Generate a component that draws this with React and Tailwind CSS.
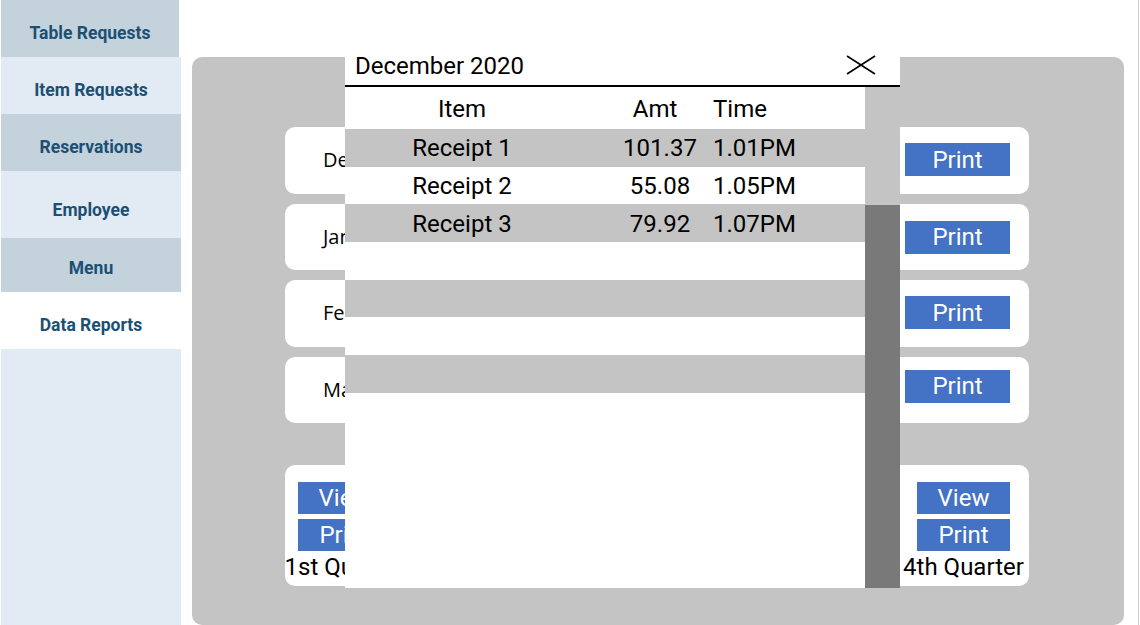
import React from 'react';

const navItems = [
  { label: 'Table Requests', h: 'h-[57px]', pt: 'pt-[10px]', bg: 'bg-[#c4d2dc]', w: 'w-[178px]' },
  { label: 'Item Requests', h: 'h-[57px]', pt: 'pt-[10px]', bg: 'bg-[#e2eaf4]', w: 'w-[180px]' },
  { label: 'Reservations', h: 'h-[57px]', pt: 'pt-[10px]', bg: 'bg-[#c4d2dc]', w: 'w-[180px]' },
  { label: 'Employee', h: 'h-[67px]', pt: 'pt-[12px]', bg: 'bg-[#e2eaf4]', w: 'w-[180px]' },
  { label: 'Menu', h: 'h-[54px]', pt: 'pt-[6px]', bg: 'bg-[#c4d2dc]', w: 'w-[180px]' },
  { label: 'Data Reports', h: 'h-[57px]', pt: 'pt-[10px]', bg: 'bg-white', w: 'w-[180px]' },
];

const months = [
  { name: 'December 2020', btn: 'mt-[16px]' },
  { name: 'January 2021', btn: 'mt-[17px]' },
  { name: 'February 2021', btn: 'mt-[16px]' },
  { name: 'March 2021', btn: 'mt-[13px]' },
];
const quarters = ['1st Quarter', '2nd Quarter', '3rd Quarter', '4th Quarter'];

const receipts = [
  { item: 'Receipt 1', amt: '101.37', time: '1.01PM' },
  { item: 'Receipt 2', amt: '55.08', time: '1.05PM' },
  { item: 'Receipt 3', amt: '79.92', time: '1.07PM' },
  { item: '', amt: '', time: '' },
  { item: '', amt: '', time: '' },
  { item: '', amt: '', time: '' },
  { item: '', amt: '', time: '' },
];

const Sidebar = () => (
  <div className="w-[182px] flex flex-col pl-px shrink-0">
    {navItems.map((n) => (
      <div
        key={n.label}
        className={`${n.h} ${n.pt} ${n.bg} ${n.w} flex items-center justify-center text-[17.5px] font-bold text-[#1b4f74]`}
      >
        {n.label}
      </div>
    ))}
    <div className="flex-1 w-[180px] bg-[#e2eaf4]" />
  </div>
);

const BlueButton = ({ children, className = '' }) => (
  <div className={`bg-[#4472c4] text-white text-[24px] leading-none flex items-center justify-center ${className}`}>
    {children}
  </div>
);

const ReceiptModal = () => (
  <div className="absolute left-[345px] top-[51px] w-[555px] h-[537px] flex flex-col">
    <div className="h-[36px] bg-white border-b-2 border-black flex items-start justify-between pl-[10px] pr-[24px] shrink-0">
      <span className="text-[24px] leading-7 pt-px text-black">December 2020</span>
      <svg width="30" height="20" viewBox="0 0 30 20" className="mt-[4px]">
        <line x1="1" y1="1" x2="29" y2="19" stroke="black" strokeWidth="1.6" />
        <line x1="29" y1="1" x2="1" y2="19" stroke="black" strokeWidth="1.6" />
      </svg>
    </div>
    <div className="flex flex-1">
      <div className="w-[520px] bg-white text-[24px] text-black">
        <div className="h-[42px] flex items-center pt-[2px]">
          <span className="w-[234px] text-center">Item</span>
          <span className="ml-[26px] w-[100px] text-center">Amt</span>
          <span className="ml-[8px]">Time</span>
        </div>
        {receipts.map((r, i) => (
          <div
            key={i}
            className={`h-[37.7px] flex items-center pt-px ${i % 2 === 0 ? 'bg-[#c4c4c4]' : 'bg-white'}`}
          >
            <span className="w-[234px] text-center">{r.item}</span>
            <span className="ml-[31px] w-[100px] text-center">{r.amt}</span>
            <span className="ml-[3px]">{r.time}</span>
          </div>
        ))}
      </div>
      <div className="w-[35px] bg-[#c4c4c4] flex flex-col">
        <div className="h-[118px]" />
        <div className="flex-1 bg-[#797979]" />
      </div>
    </div>
  </div>
);

export default function App() {
  return (
    <div className="relative w-[1140px] h-[625px] flex bg-white overflow-hidden font-['Roboto',sans-serif]">
      <Sidebar />
      <div className="w-[957px] border-r border-[#cfcfcf] pl-[10px] pr-[14px] pt-[57px]">
        <div className="h-[568px] bg-[#c4c4c4] rounded-[10px] pt-[70px] pl-[93px]">
          <div className="w-[744px] flex flex-col gap-[10px]">
            {months.map((m) => (
              <div key={m.name} className="h-[66.5px] bg-white rounded-[10px] flex items-start justify-between pl-[38px] pr-[19px]">
                <span className="font-['Open_Sans',sans-serif] text-[20px] leading-[66px] text-black">{m.name}</span>
                <BlueButton className={`w-[105px] h-[33px] ${m.btn}`}>Print</BlueButton>
              </div>
            ))}
            <div className="mt-[32px] h-[121px] bg-white rounded-[10px] flex justify-between pl-[13px] pr-[19px] pt-[17px]">
              {quarters.map((q) => (
                <div key={q} className="w-[93px] flex flex-col items-center gap-[5px]">
                  <BlueButton className="w-[93px] h-[32px] shrink-0">View</BlueButton>
                  <BlueButton className="w-[93px] h-[32px] shrink-0">Print</BlueButton>
                  <span className="text-[24px] leading-7 -mt-[3px] whitespace-nowrap text-black">{q}</span>
                </div>
              ))}
            </div>
          </div>
        </div>
      </div>
      <ReceiptModal />
    </div>
  );
}
